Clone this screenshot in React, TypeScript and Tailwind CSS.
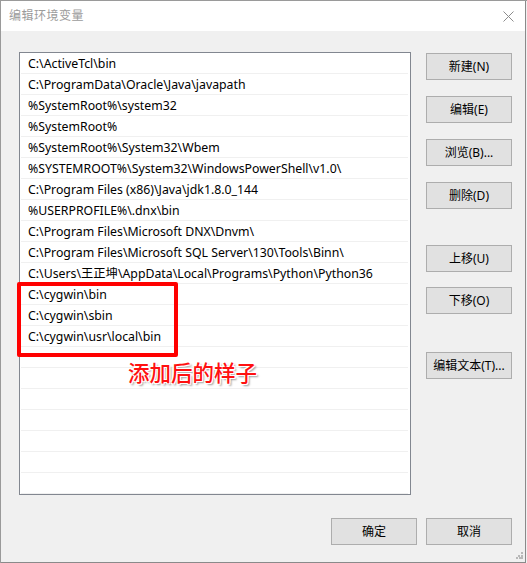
import React from 'react';

const paths = [
  'C:\\ActiveTcl\\bin',
  'C:\\ProgramData\\Oracle\\Java\\javapath',
  '%SystemRoot%\\system32',
  '%SystemRoot%',
  '%SystemRoot%\\System32\\Wbem',
  '%SYSTEMROOT%\\System32\\WindowsPowerShell\\v1.0\\',
  'C:\\Program Files (x86)\\Java\\jdk1.8.0_144',
  '%USERPROFILE%\\.dnx\\bin',
  'C:\\Program Files\\Microsoft DNX\\Dnvm\\',
  'C:\\Program Files\\Microsoft SQL Server\\130\\Tools\\Binn\\',
  'C:\\Users\\王正坤\\AppData\\Local\\Programs\\Python\\Python36',
  'C:\\cygwin\\bin',
  'C:\\cygwin\\sbin',
  'C:\\cygwin\\usr\\local\\bin',
];

const rows = [...paths, ...Array(8).fill('')];

const font = '[font-family:"Noto_Sans","Noto_Sans_CJK_SC",sans-serif]';

const Btn: React.FC<{ label: string; className?: string }> = ({ label, className = '' }) => (
  <button
    className={`w-[86px] h-[27px] bg-[#e1e1e1] border border-[#adadad] text-[12px] text-black flex items-center justify-center ${className}`}
  >
    {label}
  </button>
);

const App: React.FC = () => {
  return (
    <div className={`relative w-[527px] h-[563px] bg-[#f0f0f0] border-t border-l border-[#9a9a9a] ${font}`}>
      <div className="w-[525px] h-[562px] border-r border-b border-[#8a8a8a] flex flex-col">
        {/* title bar */}
        <div className="h-[30px] bg-white flex items-center justify-between pl-[8px] pr-[11px]">
          <span className="text-[12px] text-[#9b9b9b] tracking-[0.5px]">编辑环境变量</span>
          <svg width="11" height="11" viewBox="0 0 11 11">
            <path d="M0.5 0.5L10.5 10.5M10.5 0.5L0.5 10.5" stroke="#8c8c8c" strokeWidth="1" />
          </svg>
        </div>

        <div className="flex pl-[18px] pt-[21px]">
          {/* list */}
          <div className="w-[392px] h-[443px] bg-white border border-[#828790] overflow-hidden">
            {rows.map((r, i) => (
              <div
                key={i}
                className="h-[21px] ml-px mr-[2px] border-b border-[#f0f0f0] flex items-center pl-[7px] pt-[2px] text-[12.3px] leading-none text-black whitespace-nowrap"
              >
                {r}
              </div>
            ))}
          </div>

          {/* side buttons */}
          <div className="flex flex-col ml-[15px] pt-px">
            <Btn label="新建(N)" />
            <Btn label="编辑(E)" className="mt-[16px]" />
            <Btn label="浏览(B)..." className="mt-[16px]" />
            <Btn label="删除(D)" className="mt-[16px]" />
            <Btn label="上移(U)" className="mt-[36px]" />
            <Btn label="下移(O)" className="mt-[15px]" />
            <Btn label="编辑文本(T)..." className="mt-[38px]" />
          </div>
        </div>

        {/* bottom buttons */}
        <div className="flex justify-end gap-[9px] pr-[13px] mt-[23px]">
          <Btn label="确定" />
          <Btn label="取消" />
        </div>
      </div>

      {/* resize grip */}
      <svg className="absolute right-[4px] bottom-[4px]" width="7" height="7" viewBox="0 0 7 7">
        <rect x="5" y="0" width="2" height="2" fill="#b8b8b8" />
        <rect x="2" y="3" width="2" height="2" fill="#b8b8b8" />
        <rect x="5" y="3" width="2" height="2" fill="#b8b8b8" />
        <rect x="0" y="5" width="2" height="2" fill="#b8b8b8" />
        <rect x="3" y="5" width="2" height="2" fill="#b8b8b8" />
        <rect x="5" y="5" width="2" height="2" fill="#b8b8b8" />
      </svg>

      {/* annotation */}
      <div className="absolute left-[16px] top-[281px] w-[161px] h-[75px] border-[4px] border-[#ff0000] rounded-[2px]" />
      <div
        className={`absolute left-[127px] top-[358px] text-[21.5px] leading-[26px] font-medium text-[#ff1010] [text-shadow:1px_1px_0_#fff,-1px_-1px_0_#fff,1px_-1px_0_#fff,-1px_1px_0_#fff,2px_2px_2px_#999] [font-family:"Noto_Sans_CJK_SC",sans-serif]`}
      >
        添加后的样子
      </div>
    </div>
  );
};

export default App;
